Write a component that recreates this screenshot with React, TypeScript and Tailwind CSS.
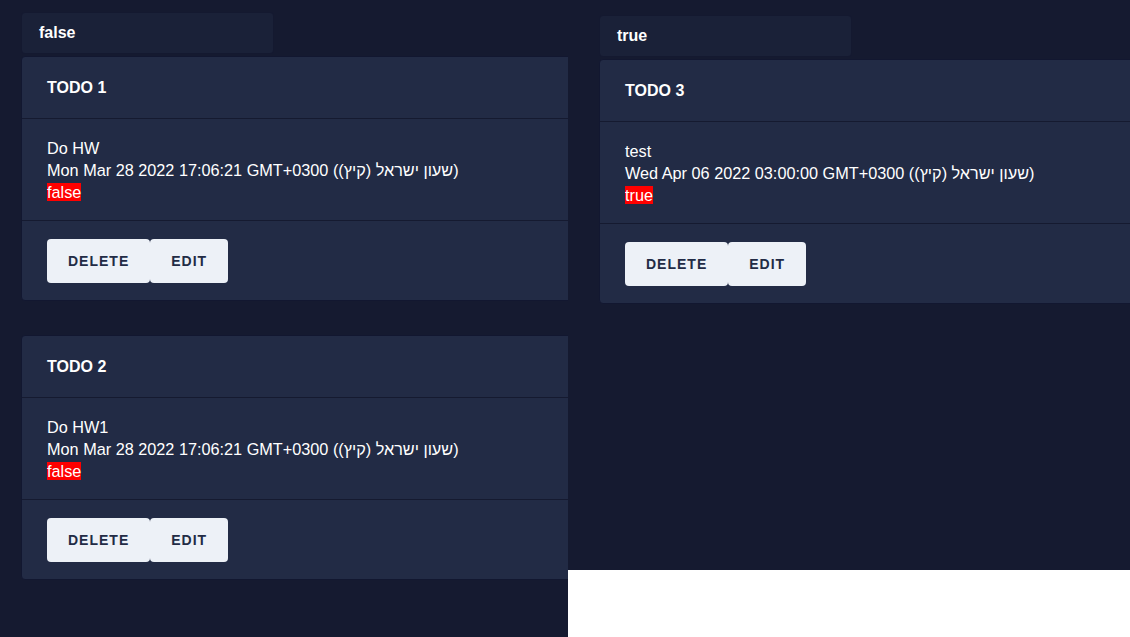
import React from 'react';

type Todo = {
    id: number;
    title: string;
    text: string;
    date: string;
    done: boolean;
};

const todos: Todo[] = [
    { id: 1, title: 'TODO 1', text: 'Do HW', date: 'Mon Mar 28 2022 17:06:21 GMT+0300 (שעון ישראל (קיץ))', done: false },
    { id: 2, title: 'TODO 2', text: 'Do HW1', date: 'Mon Mar 28 2022 17:06:21 GMT+0300 (שעון ישראל (קיץ))', done: false },
    { id: 3, title: 'TODO 3', text: 'test', date: 'Wed Apr 06 2022 03:00:00 GMT+0300 (שעון ישראל (קיץ))', done: true },
];

const TodoCard = ({ item }: { item: Todo }) => {
    return (
        <div className="w-[560px] shrink-0 rounded-[4px] border border-[#121730] bg-[#222b45] text-white">
            <div className="flex h-[62px] items-center border-b border-[#151a30] px-[25px] text-[16px] font-bold">
                {item.title}
            </div>
            <div className="border-b border-[#151a30] px-[25px] pt-[18px] pb-[17px] text-[16.25px] leading-[22px]">
                <div>{item.text}</div>
                <div>{item.date}</div>
                <div><span className="bg-[#ff0000]">{String(item.done)}</span></div>
            </div>
            <div className="flex px-[25px] pt-[18px] pb-[17px]">
                <button className="h-[44px] rounded-[4px] bg-[#edf1f7] px-[21px] text-[14px] font-bold uppercase tracking-[1px] text-[#222b45]">
                    Delete
                </button>
                <button className="h-[44px] rounded-[4px] bg-[#edf1f7] px-[21px] text-[14px] font-bold uppercase tracking-[1px] text-[#222b45]">
                    Edit
                </button>
            </div>
        </div>
    );
};

const Column = ({ status }: { status: boolean }) => {
    const list = todos.filter(t => t.done === status);
    return (
        <div>
            <div className="mb-[2px] flex h-[42px] w-[253px] items-center rounded-[4px] border border-[#141930] bg-[#1a2138] pl-[17px] text-[16px] font-bold text-white">
                {String(status)}
            </div>
            <div className="flex flex-col gap-[34px]">
                {list.map(item => (
                    <TodoCard key={item.id} item={item} />
                ))}
            </div>
        </div>
    );
};

const App = () => {
    return (
        <div className="flex min-h-screen items-start bg-white font-['Liberation_Sans',Arial,sans-serif]">
            <div className="w-[568px] shrink-0 overflow-hidden bg-[#151a30] pt-[12px] pb-[80px] pl-[21px]">
                <Column status={false} />
            </div>
            <div className="h-[570px] min-w-0 flex-1 overflow-hidden bg-[#151a30] pt-[15px] pl-[31px]">
                <Column status={true} />
            </div>
        </div>
    );
};

export default App;
